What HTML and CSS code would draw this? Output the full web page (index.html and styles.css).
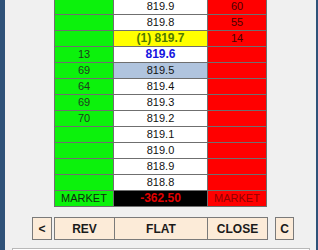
FILE: index.html
```html
<!DOCTYPE html>
<html lang="en">
<head>
  <meta charset="UTF-8">
  <title>Price Ladder</title>
  <link rel="stylesheet" href="styles.css">
</head>
<body>
  <div class="window">
    <div class="ladder">
      <div class="bid"></div><div class="price">819.9</div><div class="ask">60</div>
      <div class="bid"></div><div class="price">819.8</div><div class="ask">55</div>
      <div class="bid"></div><div class="price position">(1) 819.7</div><div class="ask">14</div>
      <div class="bid">13</div><div class="price last">819.6</div><div class="ask"></div>
      <div class="bid">69</div><div class="price selected">819.5</div><div class="ask"></div>
      <div class="bid">64</div><div class="price">819.4</div><div class="ask"></div>
      <div class="bid">69</div><div class="price">819.3</div><div class="ask"></div>
      <div class="bid">70</div><div class="price">819.2</div><div class="ask"></div>
      <div class="bid"></div><div class="price">819.1</div><div class="ask"></div>
      <div class="bid"></div><div class="price">819.0</div><div class="ask"></div>
      <div class="bid"></div><div class="price">818.9</div><div class="ask"></div>
      <div class="bid"></div><div class="price">818.8</div><div class="ask"></div>
      <div class="bid market">MARKET</div><div class="price pnl">-362.50</div><div class="ask market">MARKET</div>
    </div>

    <div class="actions">
      <button class="btn small">&lt;</button>
      <div class="btn-group">
        <button class="btn rev">REV</button>
        <button class="btn flat">FLAT</button>
        <button class="btn close">CLOSE</button>
      </div>
      <button class="btn small c">C</button>
    </div>

    <div class="panel"></div>
  </div>
</body>
</html>
```

FILE: styles.css
```css
html, body {
  margin: 0;
  padding: 0;
  overflow: hidden;
}

body {
  font-family: 'Liberation Sans', Arial, sans-serif;
  background: #f0f0f0;
}

.window {
  width: 318px;
  height: 250px;
  box-sizing: border-box;
  background: #f0f0f0;
  border-left: 5px solid #2f5279;
  border-right: 2px solid #2f5279;
  overflow: hidden;
}

.ladder {
  display: grid;
  grid-template-columns: 58px 93px 58px;
  grid-auto-rows: 15px;
  gap: 1px;
  padding: 1px;
  background: #6f6f6f;
  width: 211px;
  margin-left: 49px;
  margin-top: -2px;
  font-size: 11px;
}

.ladder div {
  display: flex;
  justify-content: center;
  align-items: center;
  line-height: 15px;
}

.bid {
  background: #0cf20c;
  color: #1f3a1f;
}

.ask {
  background: #ff0000;
  color: #4a0000;
}

.price {
  background: #ffffff;
  color: #111;
}

.position {
  background: #ffff00;
  color: #507a00;
  font-weight: bold;
  font-size: 12px;
}

.last {
  color: #1414e0;
  font-weight: bold;
  font-size: 12px;
}

.selected {
  background: #b0c4de;
}

.pnl {
  background: #000;
  color: #e00000;
  font-weight: bold;
  font-size: 12px;
}

.bid.market {
  color: #0f2a0f;
}

.ask.market {
  color: #900000;
}

.actions {
  display: flex;
  margin-top: 10px;
  margin-left: 27px;
  height: 23px;
}

.btn {
  font-family: 'Liberation Sans', Arial, sans-serif;
  font-size: 12px;
  font-weight: bold;
  color: #1a1a1a;
  background: #fcebd8;
  border: 1px solid #7a7a7a;
  height: 23px;
  padding: 0;
  margin: 0;
}

.btn.small {
  width: 20px;
}

.btn-group {
  display: flex;
  margin-left: 2px;
}

.btn-group .btn + .btn {
  border-left: none;
}

.rev {
  width: 61px;
}

.flat {
  width: 93px;
}

.close {
  width: 60px;
}

.btn.c {
  width: 19px;
  margin-left: 7px;
}

.panel {
  margin-top: 8px;
  margin-left: 7px;
  width: 298px;
  height: 20px;
  background: #fff;
  border: 1px solid #b8b8b8;
  box-sizing: border-box;
}
```
